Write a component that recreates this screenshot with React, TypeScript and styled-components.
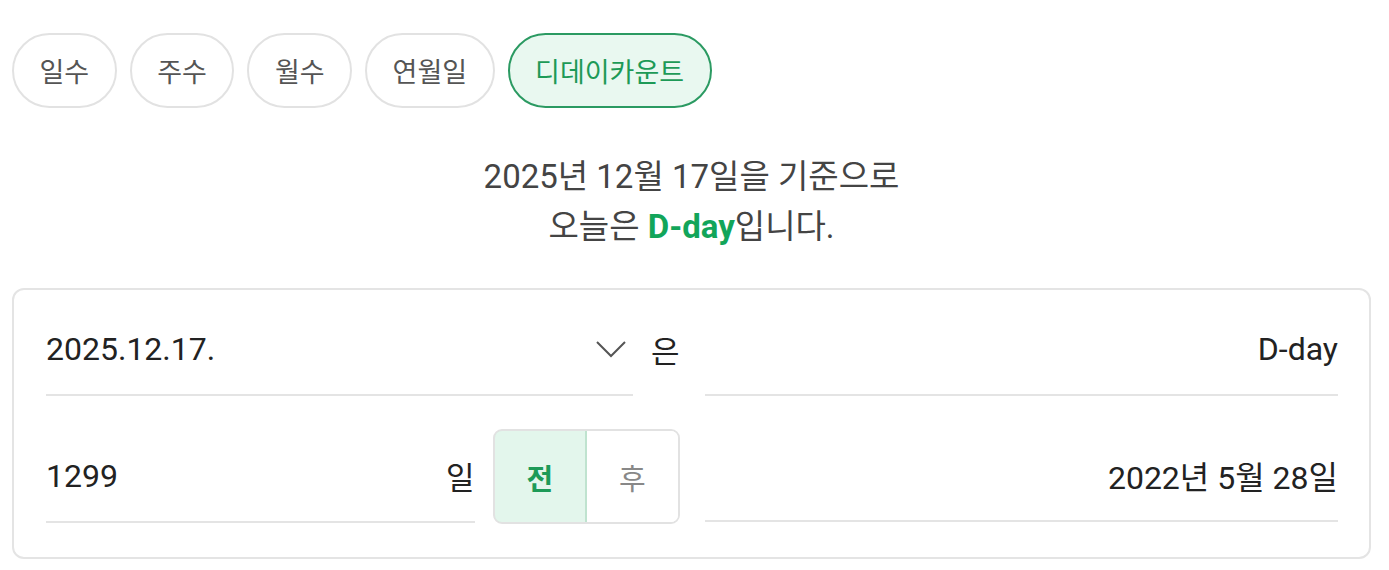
import React from "react";
import styled, { createGlobalStyle } from "styled-components";

const GlobalStyle = createGlobalStyle`
  body {
    margin: 0;
    background: #ffffff;
    font-family: Roboto, "Noto Sans CJK KR", sans-serif;
  }
`;

const tabs = ["일수", "주수", "월수", "연월일", "디데이카운트"];

const App = () => {
  return (
    <Page>
      <GlobalStyle />
      <TabBar>
        {tabs.map((t, i) => (
          <Tab key={t} active={i === tabs.length - 1}>
            {t}
          </Tab>
        ))}
      </TabBar>

      <Headline>
        2025년 12월 17일을 기준으로
        <br />
        오늘은 <Strong>D-day</Strong>입니다.
      </Headline>

      <Card>
        <Row>
          <Field>
            <Value>2025.12.17.</Value>
            <Chevron width="32" height="18" viewBox="0 0 32 18">
              <polyline
                points="2,2 16,16 30,2"
                fill="none"
                stroke="#555"
                strokeWidth="2"
              />
            </Chevron>
          </Field>
          <Suffix>은</Suffix>
        </Row>
        <Field align="right">
          <Value>D-day</Value>
        </Field>

        <Row>
          <Field>
            <Value>1299</Value>
            <Unit>일</Unit>
          </Field>
          <Toggle>
            <ToggleButton selected>전</ToggleButton>
            <ToggleButton>후</ToggleButton>
          </Toggle>
        </Row>
        <Field align="right">
          <Value>2022년 5월 28일</Value>
        </Field>
      </Card>
    </Page>
  );
};

export default App;

const Page = styled.div`
  padding: 33px 18px 12px 12px;
`;

const TabBar = styled.div`
  display: flex;
  gap: 13px;
`;

const Tab = styled.button<{ active?: boolean }>`
  height: 75px;
  padding: 0 25.5px;
  border: 2px solid ${({ active }) => (active ? "#2b9a62" : "#e2e2e2")};
  border-radius: 40px;
  background: ${({ active }) => (active ? "#e9f8f0" : "#ffffff")};
  color: ${({ active }) => (active ? "#1d9a57" : "#555555")};
  font-family: Roboto, "Noto Sans CJK KR", sans-serif;
  font-size: 27px;
`;

const Headline = styled.p`
  margin: 44px 0 36px;
  color: #444444;
  font-size: 33px;
  line-height: 50px;
  text-align: center;
`;

const Strong = styled.b`
  color: #12a55a;
  font-weight: 700;
`;

const Card = styled.div`
  display: grid;
  grid-template-columns: 1fr 1fr;
  column-gap: 25px;
  row-gap: 33px;
  padding: 13px 31px 33px 32px;
  border: 2px solid #e4e4e4;
  border-radius: 12px;
`;

const Row = styled.div`
  display: flex;
  align-items: center;
  gap: 18px;
`;

const Field = styled.div<{ align?: "left" | "right" }>`
  flex: 1;
  display: flex;
  align-items: center;
  justify-content: ${({ align }) => (align === "right" ? "flex-end" : "space-between")};
  height: 91px;
  border-bottom: 2px solid #e4e4e4;
  color: #222222;
  font-size: 32px;
`;

const Value = styled.span``;

const Chevron = styled.svg`
  margin-right: 6px;
`;

const Suffix = styled.span`
  color: #222222;
  font-size: 31px;
`;

const Unit = styled.span`
  font-size: 31px;
`;

const Toggle = styled.div`
  display: flex;
  width: 183px;
  height: 91px;
  border: 2px solid #e2e2e2;
  border-radius: 9px;
  overflow: hidden;
`;

const ToggleButton = styled.button<{ selected?: boolean }>`
  flex: 1;
  margin: ${({ selected }) => (selected ? "-2px 0 -2px -2px" : "0")};
  border: ${({ selected }) => (selected ? "2px solid #bfe3cf" : "none")};
  border-radius: ${({ selected }) => (selected ? "9px 0 0 9px" : "0")};
  background: ${({ selected }) => (selected ? "#e3f6ec" : "#ffffff")};
  color: ${({ selected }) => (selected ? "#1d9a57" : "#888888")};
  font-family: Roboto, "Noto Sans CJK KR", sans-serif;
  font-size: 29px;
  font-weight: ${({ selected }) => (selected ? 700 : 400)};
`;
